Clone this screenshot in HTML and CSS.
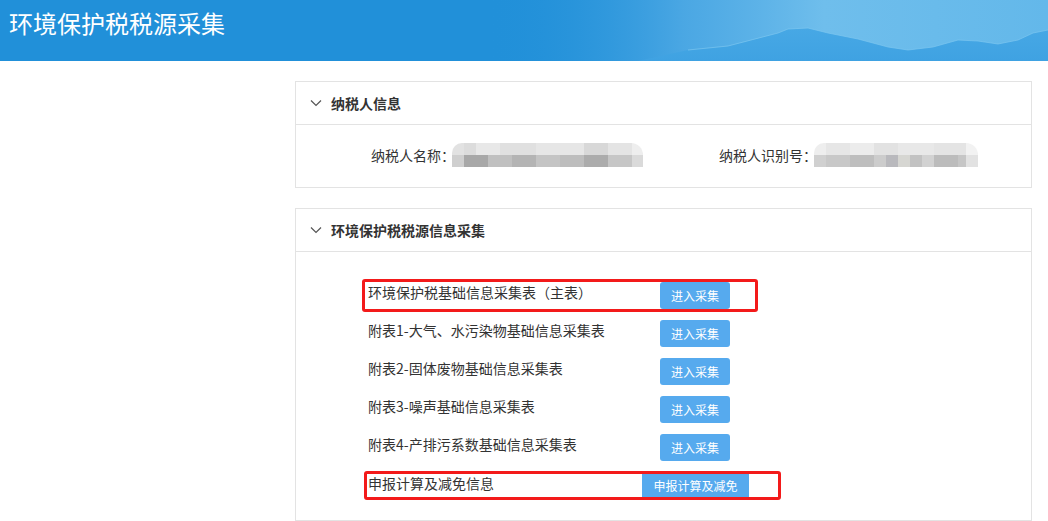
FILE: index.html
```html
<!DOCTYPE html>
<html lang="zh-CN">
<head>
<meta charset="utf-8">
<title>环境保护税税源采集</title>
<link rel="stylesheet" href="styles.css">
</head>
<body>
<header class="topbar">
  <svg class="topbar-art" width="560" height="61" viewBox="0 0 560 61" preserveAspectRatio="none">
    <defs>
      <linearGradient id="sky" x1="0" y1="0" x2="1" y2="0">
        <stop offset="0" stop-color="#2190d9" stop-opacity="0"/>
        <stop offset="0.35" stop-color="#55ade6" stop-opacity="0.8"/>
        <stop offset="0.6" stop-color="#6fbeec"/>
        <stop offset="1" stop-color="#63b8ea"/>
      </linearGradient>
      <linearGradient id="mtn" x1="0" y1="0" x2="0" y2="1">
        <stop offset="0" stop-color="#47a8e5"/>
        <stop offset="1" stop-color="#3fa2e2"/>
      </linearGradient>
    </defs>
    <rect x="0" y="0" width="560" height="61" fill="url(#sky)"/>
    <path d="M150 61 L200 50 L240 46 L290 33 L300 29 L320 28 L340 33 L370 39 L400 47 L420 50 L445 47 L470 40 L490 41 L510 44 L530 40 L545 33 L560 30 L560 61 Z" fill="url(#mtn)"/>
    <path d="M200 50 L240 46 L290 33 L300 29 L320 28 L340 33 L370 39 L400 47 L420 50 L445 47 L470 40 L490 41 L510 44 L530 40 L545 33 L560 30" fill="none" stroke="#7cc6ef" stroke-width="1" opacity="0.7"/>
  </svg>
  <h1 class="topbar-title">环境保护税税源采集</h1>
</header>

<main class="content">
  <section class="panel">
    <div class="panel-head">
      <svg class="chev" width="12" height="8" viewBox="0 0 12 8"><polyline points="1,1.5 6,6.5 11,1.5" fill="none" stroke="#555" stroke-width="1.2"/></svg>
      <span class="panel-title">纳税人信息</span>
    </div>
    <div class="info-body">
      <div class="info-item">
        <span class="info-label">纳税人名称：</span>
        <span class="blur blur-name"></span>
      </div>
      <div class="info-item info-item-2">
        <span class="info-label">纳税人识别号：</span>
        <span class="blur blur-id"></span>
      </div>
    </div>
  </section>

  <section class="panel panel-2">
    <div class="panel-head">
      <svg class="chev" width="12" height="8" viewBox="0 0 12 8"><polyline points="1,1.5 6,6.5 11,1.5" fill="none" stroke="#555" stroke-width="1.2"/></svg>
      <span class="panel-title">环境保护税税源信息采集</span>
    </div>
    <div class="list-body">
      <div class="row row-mark">
        <span class="row-text">环境保护税基础信息采集表（主表）</span>
        <button class="btn">进入采集</button>
      </div>
      <div class="row">
        <span class="row-text">附表1-大气、水污染物基础信息采集表</span>
        <button class="btn">进入采集</button>
      </div>
      <div class="row">
        <span class="row-text">附表2-固体废物基础信息采集表</span>
        <button class="btn">进入采集</button>
      </div>
      <div class="row">
        <span class="row-text">附表3-噪声基础信息采集表</span>
        <button class="btn">进入采集</button>
      </div>
      <div class="row">
        <span class="row-text">附表4-产排污系数基础信息采集表</span>
        <button class="btn">进入采集</button>
      </div>
      <div class="row row-mark row-last">
        <span class="row-text row-text-last">申报计算及减免信息</span>
        <button class="btn btn-flat">申报计算及减免</button>
      </div>
    </div>
  </section>
</main>
</body>
</html>
```

FILE: styles.css
```css
* { box-sizing: border-box; }

html, body {
  margin: 0;
  padding: 0;
  background: #fff;
  font-family: "Noto Sans CJK SC", "Noto Sans", "Liberation Sans", sans-serif;
  color: #333;
}

.topbar {
  position: relative;
  height: 61px;
  background: #2190d9;
  overflow: hidden;
}

.topbar-art {
  position: absolute;
  right: 0;
  top: 0;
  width: 560px;
  height: 61px;
}

.topbar-title {
  position: relative;
  margin: 0;
  padding-left: 9px;
  font-size: 24px;
  font-weight: normal;
  line-height: 46px;
  color: #fff;
}

.content {
  padding: 20px 0 0 295px;
}

.panel {
  width: 737px;
  border: 1px solid #e3e3e3;
  background: #fff;
}

.panel-2 {
  margin-top: 20px;
}

.panel-head {
  display: flex;
  align-items: center;
  height: 43px;
  padding-left: 14px;
  border-bottom: 1px solid #e3e3e3;
}

.chev {
  display: block;
  margin-right: 9px;
}

.panel-title {
  font-size: 14px;
  font-weight: bold;
  color: #333;
  line-height: 20px;
}

.info-body {
  display: flex;
  align-items: center;
  height: 62px;
  padding-left: 75px;
  padding-bottom: 2px;
}

.info-item {
  display: flex;
  align-items: center;
}

.info-item-2 {
  margin-left: 76px;
}

.info-label {
  font-size: 14px;
  color: #333;
  line-height: 20px;
}

.blur {
  display: block;
  height: 24px;
  margin-left: -3px;
  border-radius: 10px 12px 0 0;
}

.blur-name {
  width: 191px;
  background:
    linear-gradient(to right,
      #e2e2e2 0 12px, #dcdcdc 12px 24px, #e8e8e8 24px 48px, #e0e0e0 48px 84px,
      #e6e6e6 84px 132px, #d8d8d8 132px 156px, #e4e4e4 156px 180px, #eeeeee 180px 191px) top / 100% 12px no-repeat,
    linear-gradient(to right,
      #cfcfcf 0 12px, #a8a8a8 12px 36px, #c0c0c0 36px 60px, #b4b4b4 60px 84px,
      #c4c4c4 84px 108px, #bdbdbd 108px 132px, #acacac 132px 156px, #c6c6c6 156px 180px, #dadada 180px 191px) bottom / 100% 12px no-repeat;
}

.blur-id {
  width: 164px;
  background:
    linear-gradient(to right,
      #eeeeee 0 12px, #e6e6e6 12px 36px, #ececec 36px 60px, #e2e2e2 60px 84px,
      #e8e8e8 84px 120px, #e4e4e4 120px 152px, #f2f2f2 152px 164px) top / 100% 12px no-repeat,
    linear-gradient(to right,
      #d0d0d0 0 12px, #c8c8c8 12px 36px, #bebebe 36px 60px, #cccccc 60px 72px,
      #b9b9bd 72px 84px, #d6d6d2 84px 96px, #c2c2c2 96px 108px, #d2d2d2 108px 120px,
      #bcbcbc 120px 144px, #c6c6c6 144px 152px, #e2e2e2 152px 164px) bottom / 100% 12px no-repeat;
}

.list-body {
  display: flex;
  flex-direction: column;
  gap: 5px;
  padding: 27px 0 20px 66px;
}

.row {
  display: flex;
  align-items: flex-start;
  width: 396px;
  border: 3px solid transparent;
  border-radius: 3px;
  padding: 0 3px;
}

.row-mark {
  border-color: #f31a1a;
}

.row-last {
  width: 417px;
  margin-top: 2px;
  margin-left: 2px;
  padding: 0 4px 0 1px;
}

.row-text {
  width: 292px;
  font-size: 14px;
  line-height: 20px;
  color: #333;
}

.row-text-last {
  width: 274px;
  line-height: 18px;
}

.btn {
  display: block;
  height: 27px;
  padding: 0 11px;
  border: 0;
  border-radius: 3px;
  background: #56aaee;
  color: #fff;
  font-family: "Noto Sans CJK SC", "Noto Sans", sans-serif;
  font-size: 12px;
  line-height: 27px;
  cursor: pointer;
}

.btn-flat {
  width: 107px;
  height: 23px;
  line-height: 23px;
  padding: 0;
  text-align: center;
  border-radius: 0;
}
```
